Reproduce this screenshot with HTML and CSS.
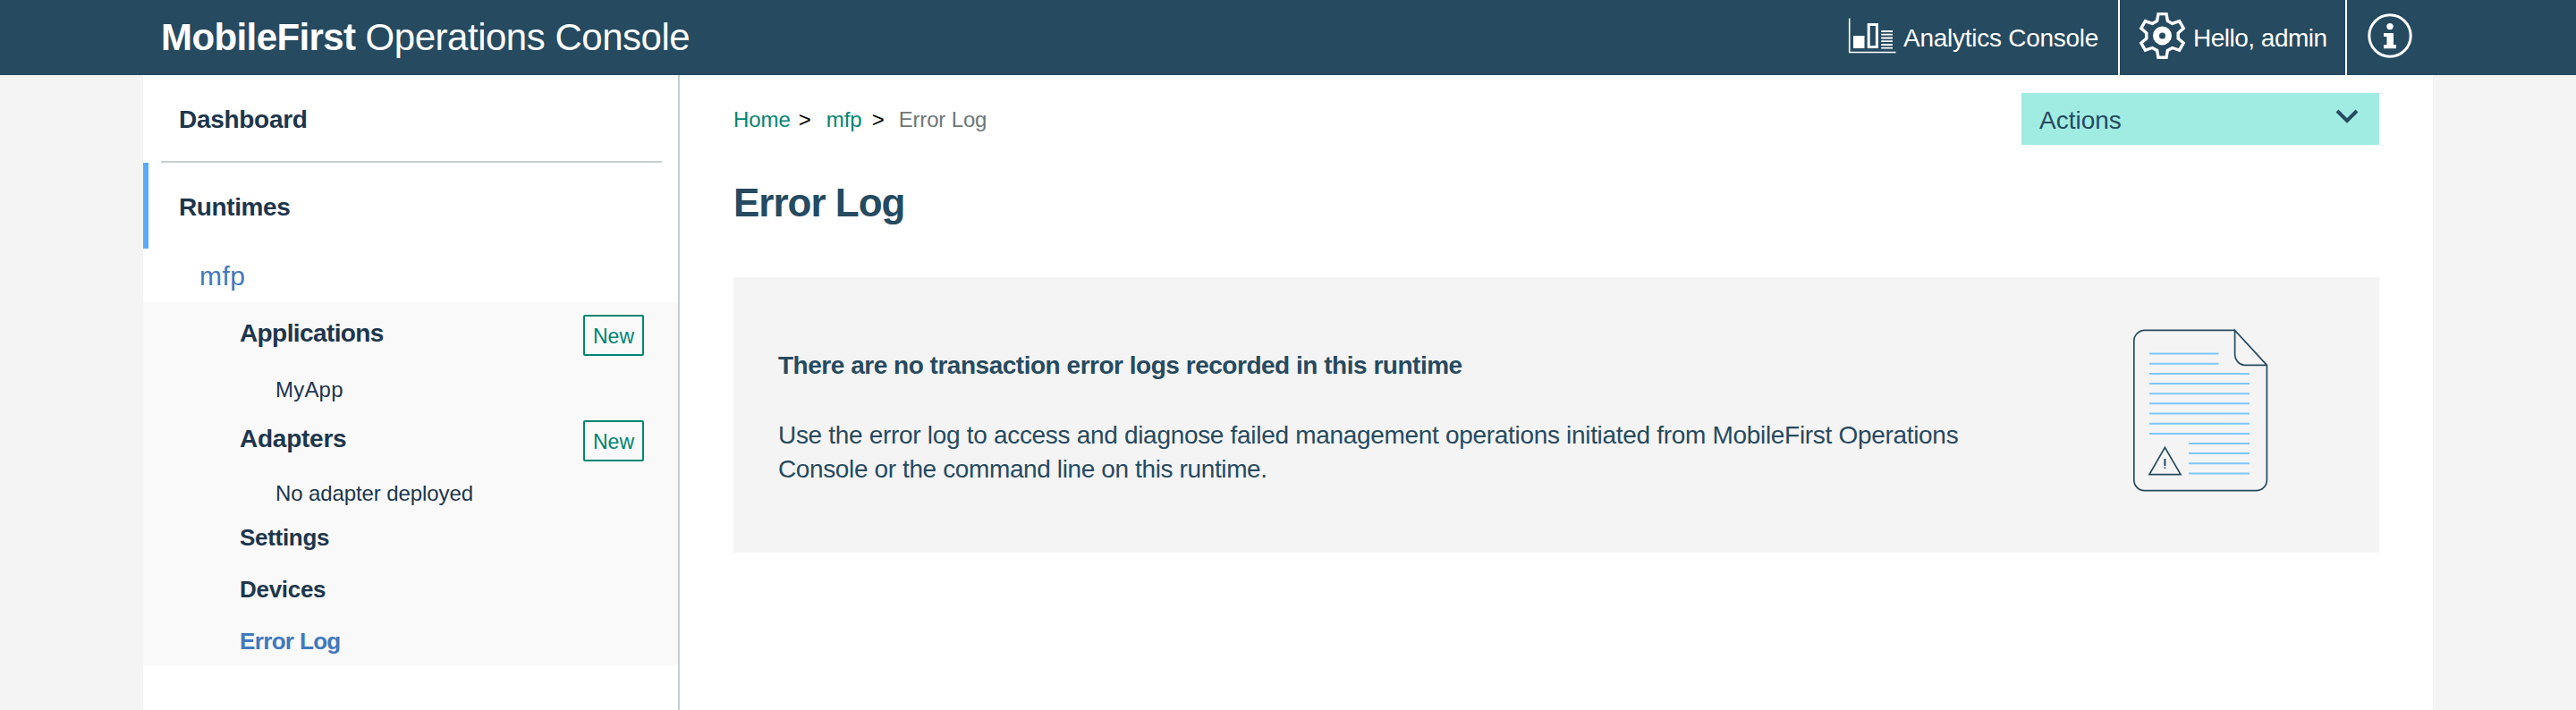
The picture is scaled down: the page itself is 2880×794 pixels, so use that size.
FILE: index.html
```html
<!DOCTYPE html>
<html lang="en">
<head>
<meta charset="utf-8">
<title>MobileFirst Operations Console</title>
<link rel="stylesheet" href="styles.css">
</head>
<body>
<header class="topbar">
  <h1 class="brand"><b class="brand-name">MobileFirst</b> Operations Console</h1>
  <nav class="tools">
    <a class="tool tool-analytics">
      <svg class="icon-chart" width="56" height="42" viewBox="0 0 56 42">
        <path d="M2.7 0.5V38.5H54.5" fill="none" stroke="#fff" stroke-width="1.6"/>
        <path d="M7 20H19.5V34H7z" fill="#fff"/>
        <path d="M24.2 7.6H33.4V32.4H24.2z" fill="none" stroke="#fff" stroke-width="3"/>
        <path d="M38.2 15H51M38.2 18.7H51M38.2 22.5H51M38.2 26.2H51M38.2 30H51M38.2 33.6H51" stroke="#fff" stroke-width="1.8"/>
      </svg>
      <span class="tool-text">Analytics Console</span>
    </a>
    <a class="tool tool-user">
      <svg class="icon-gear" width="54" height="56" viewBox="0 0 54 56">
        <path d="M23 3.6H32L33.4 11.4L38.6 14.3L46.6 11.6L51.2 19.6L45.2 24.9V30.9L51.2 36.2L46.6 44.2L38.6 41.5L33.4 44.4L32 52.2H23L21.6 44.4L16.4 41.5L8.4 44.2L3.8 36.2L9.8 30.9V24.9L3.8 19.6L8.4 11.6L16.4 14.3L21.6 11.4z" fill="none" stroke="#fff" stroke-width="3.4"/>
        <circle cx="27.5" cy="27.9" r="7" fill="none" stroke="#fff" stroke-width="7"/>
      </svg>
      <span class="tool-text">Hello, admin</span>
    </a>
    <a class="tool tool-info">
      <svg class="icon-info" width="50" height="50" viewBox="0 0 50 50">
        <circle cx="25" cy="25" r="23.2" fill="none" stroke="#fff" stroke-width="3"/>
        <circle cx="25" cy="14.6" r="3.7" fill="#fff"/>
        <path d="M18 22H29V35H32V39.2H18V35H21.5V26H18z" fill="#fff"/>
      </svg>
    </a>
  </nav>
</header>
<div class="page">
  <aside class="sidebar">
    <div class="nav-top dashboard">Dashboard</div>
    <div class="nav-top runtimes">Runtimes</div>
    <div class="runtime-name">mfp</div>
    <div class="runtime-menu">
      <div class="group"><span class="group-title applications">Applications</span><button class="new-btn">New</button></div>
      <div class="sub-item sub-app">MyApp</div>
      <div class="group"><span class="group-title adapters">Adapters</span><button class="new-btn">New</button></div>
      <div class="sub-item sub-adapter">No adapter deployed</div>
      <div class="menu-item">Settings</div>
      <div class="menu-item">Devices</div>
      <div class="menu-item selected">Error Log</div>
    </div>
  </aside>
  <main class="content">
    <div class="content-head">
      <div class="crumbs">
        <a class="crumb-link">Home</a><span class="sep sep-home">&gt;</span><a class="crumb-link">mfp</a><span class="sep sep-mfp">&gt;</span><span class="crumb-current">Error Log</span>
      </div>
      <button class="actions"><span>Actions</span>
        <svg class="chevron" width="26" height="18" viewBox="0 0 26 18"><path d="M2 3L13 14L24 3" fill="none" stroke="#264a60" stroke-width="4"/></svg>
      </button>
    </div>
    <h2 class="title">Error Log</h2>
    <section class="empty">
      <div class="empty-text">
        <h3 class="empty-title">There are no transaction error logs recorded in this runtime</h3>
        <p class="empty-body">Use the error log to access and diagnose failed management operations initiated from MobileFirst Operations<br><span class="empty-last">Console or the command line on this runtime.</span></p>
      </div>
      <svg class="doc" width="200" height="220" viewBox="0 0 200 220" fill="none">
        <g stroke="#264a60" stroke-width="1.7">
          <path d="M138.6 19.4H37.5A12 12 0 0 0 25.8 31.4V186.7A12 12 0 0 0 37.5 198.7H162.5A12 12 0 0 0 174.4 186.7V58.4L138.6 19.4V46A12 12 0 0 0 149 58.4H174.4"/>
          <path d="M60.4 150.4L78 180.6H43z"/>
          <path d="M60.4 163V171M60.4 172.4V174" stroke-width="2"/>
        </g>
        <path d="M43 45.6H120.5M43 56.7H120.5M43 68H155M43 79H155M43 90.2H155M43 101.3H155M43 112.5H155M43 123.7H155M43 135H155M87 146H155M87 157H155M87 168.3H155M87 179.5H155" stroke="#7cc7ff" stroke-width="2"/>
      </svg>
    </section>
  </main>
</div>
</body>
</html>
```
FILE: styles.css
```css
* { box-sizing: border-box; }
body {
  margin: 0;
  background: #f4f4f4;
  font-family: "Liberation Sans", Arial, sans-serif;
  color: #264a60;
  height: 794px;
  overflow: hidden;
}
button { font-family: inherit; margin: 0; }

.topbar {
  height: 84px;
  padding: 0 157px 0 180px;
  background: #264a60;
  color: #fff;
  display: flex;
  justify-content: space-between;
}
.brand {
  margin: 0;
  font-size: 42px;
  font-weight: 400;
  line-height: 83px;
  letter-spacing: -0.48px;
}
.brand-name { letter-spacing: -0.6px; }
.tools { display: flex; }
.tool { display: flex; height: 84px; }
.tool-text { font-size: 28px; line-height: 85px; }
.tool-analytics { width: 303px; }
.icon-chart { margin-top: 20px; }
.tool-analytics .tool-text { margin-left: 7px; letter-spacing: -0.26px; }
.tool-user { width: 254px; border-left: 2px solid #fff; padding-left: 20px; }
.icon-gear { margin-top: 12px; }
.tool-user .tool-text { margin-left: 8px; letter-spacing: -0.5px; }
.tool-info { width: 101px; border-left: 2px solid #fff; padding-left: 23px; }
.icon-info { margin-top: 15px; }

.page {
  display: flex;
  width: 2560px;
  height: 710px;
  margin: 0 auto;
  background: #fff;
}
.sidebar {
  width: 600px;
  border-right: 2px solid #c6d0d2;
  color: #1d364d;
}
.nav-top {
  height: 96px;
  padding-top: 4px;
  line-height: 92px;
  font-size: 28px;
  font-weight: 700;
}
.dashboard {
  height: 98px;
  margin: 0 18px 0 20px;
  padding-left: 20px;
  letter-spacing: -0.3px;
  border-bottom: 2px solid #c6d0d2;
}
.runtimes {
  padding-left: 34px;
  border-left: 6px solid #5aaafa;
  letter-spacing: -0.4px;
}
.runtime-name {
  height: 60px;
  padding-left: 63px;
  font-size: 30px;
  line-height: 61px;
  letter-spacing: 0.4px;
  color: #4178be;
}
.runtime-menu { background: #f9f9f9; }
.group {
  display: flex;
  justify-content: space-between;
  height: 72px;
  padding: 0 38px 0 108px;
  font-size: 28px;
  font-weight: 700;
  line-height: 69px;
}
.applications { letter-spacing: -0.6px; }
.adapters { letter-spacing: -0.25px; }
.new-btn {
  width: 68px;
  height: 46px;
  margin-top: 14px;
  padding: 3px 0 0;
  border: 2px solid #008571;
  border-radius: 2px;
  background: transparent;
  color: #008571;
  font-size: 23px;
  line-height: 39px;
}
.sub-item { padding-left: 148px; font-size: 24px; }
.sub-app { height: 46px; padding-top: 5px; line-height: 41px; letter-spacing: 0.2px; }
.sub-adapter { height: 42px; padding-top: 5px; line-height: 37px; letter-spacing: -0.1px; }
.menu-item {
  height: 58px;
  padding: 4px 0 0 108px;
  font-size: 26px;
  font-weight: 700;
  line-height: 54px;
  letter-spacing: -0.3px;
}
.selected { color: #4178be; letter-spacing: -0.65px; }

.content { flex: 1; padding: 20px 60px 0; }
.content-head { display: flex; justify-content: space-between; height: 58px; }
.crumbs {
  display: flex;
  font-size: 24px;
  line-height: 59px;
  letter-spacing: -0.05px;
}
.crumb-link { color: #008571; }
.sep { color: #000; }
.sep-home { margin: 0 17px 0 9px; }
.sep-mfp { margin: 0 16px 0 11px; }
.crumb-current { color: #6d7777; letter-spacing: -0.15px; }
.actions {
  display: flex;
  justify-content: space-between;
  width: 400px;
  height: 58px;
  padding: 0 23px 0 20px;
  border: 0;
  background: #a0ece2;
  color: #264a60;
  font-size: 28px;
  line-height: 61px;
}
.chevron { margin-top: 17px; }
.title {
  margin: 44px 0 0;
  height: 104px;
  font-size: 44px;
  line-height: 42px;
  letter-spacing: -1px;
}
.empty {
  display: flex;
  justify-content: space-between;
  height: 308px;
  padding: 40px 100px 0 50px;
  background: #f4f4f4;
}
.empty-title {
  margin: 40px 0 40px;
  font-size: 28px;
  line-height: 38px;
  letter-spacing: -0.48px;
}
.empty-body {
  margin: 0;
  font-size: 28px;
  line-height: 38px;
  letter-spacing: -0.31px;
}
.empty-last { letter-spacing: -0.38px; }
```
